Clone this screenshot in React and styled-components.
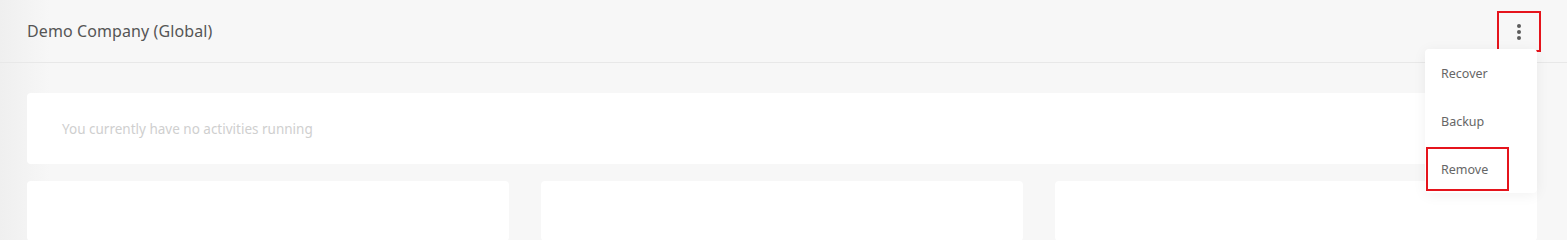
import React from "react";
import styled, { createGlobalStyle } from "styled-components";

const GlobalStyle = createGlobalStyle`
  html, body {
    margin: 0;
    padding: 0;
    background: #f7f7f7;
  }
  body {
    font-family: "Noto Sans", sans-serif;
  }
`;

const Page = styled.div`
  position: relative;
  min-height: 211px;
  background: linear-gradient(to right, #efefef 0px, #f7f7f7 50px);
`;

const Header = styled.header`
  height: 63px;
  display: flex;
  align-items: center;
  justify-content: space-between;
  padding: 0 27px;
  border-bottom: 1px solid #e8e8e8;
  box-sizing: border-box;
`;

const Title = styled.h1`
  margin: 0;
  font-family: "Noto Sans", sans-serif;
  font-weight: 400;
  font-size: 16px;
  letter-spacing: 0.1px;
  color: #555;
`;

const MenuWrap = styled.div`
  position: relative;
  margin-right: -1px;
`;

const Kebab = styled.button`
  width: 44px;
  height: 41px;
  margin-top: 1px;
  display: flex;
  flex-direction: column;
  align-items: center;
  justify-content: center;
  gap: 2px;
  background: transparent;
  border: 2px solid #e5141c;
  padding: 0;
  box-sizing: border-box;
`;

const Dot = styled.span`
  width: 4px;
  height: 4px;
  border-radius: 50%;
  background: #5c5c5c;
`;

const Menu = styled.ul`
  position: absolute;
  top: 39px;
  right: 4px;
  width: 112px;
  margin: 0;
  padding: 0;
  list-style: none;
  background: #fff;
  border-radius: 4px;
  box-shadow: 0 2px 14px rgba(0, 0, 0, 0.06);
  z-index: 5;
`;

const MenuItem = styled.li`
  display: flex;
  align-items: center;
  padding-left: ${(p) => (p.$marked ? "15px" : "16px")};
  font-family: "Noto Sans", sans-serif;
  font-size: 12.5px;
  color: #666;
  box-sizing: border-box;
  width: ${(p) => (p.$marked ? "83px" : "auto")};
  height: ${(p) => (p.$marked ? "44px" : "48px")};
  margin: ${(p) => (p.$marked ? "2px 0 2px 1px" : "0")};
  outline: ${(p) => (p.$marked ? "2px solid #e5141c" : "none")};
  outline-offset: -2px;
`;

const Content = styled.main`
  padding: 30px 30px 0 27px;
  display: flex;
  flex-direction: column;
  gap: 17px;
`;

const ActivityCard = styled.section`
  height: 71px;
  background: #fff;
  border-radius: 4px;
  display: flex;
  align-items: center;
  padding-left: 35px;
`;

const Empty = styled.p`
  margin: 0;
  font-family: "Noto Sans", sans-serif;
  font-size: 13.5px;
  color: #cfcfcf;
`;

const Grid = styled.div`
  display: grid;
  grid-template-columns: repeat(3, 1fr);
  gap: 32px;
`;

const Card = styled.div`
  height: 60px;
  background: #fff;
  border-radius: 4px;
`;

export default function App() {
  return (
    <>
      <GlobalStyle />
      <Page>
        <Header>
          <Title>Demo Company (Global)</Title>
          <MenuWrap>
            <Kebab aria-label="More">
              <Dot />
              <Dot />
              <Dot />
            </Kebab>
            <Menu>
              <MenuItem>Recover</MenuItem>
              <MenuItem>Backup</MenuItem>
              <MenuItem $marked>Remove</MenuItem>
            </Menu>
          </MenuWrap>
        </Header>
        <Content>
          <ActivityCard>
            <Empty>You currently have no activities running</Empty>
          </ActivityCard>
          <Grid>
            <Card />
            <Card />
            <Card />
          </Grid>
        </Content>
      </Page>
    </>
  );
}
